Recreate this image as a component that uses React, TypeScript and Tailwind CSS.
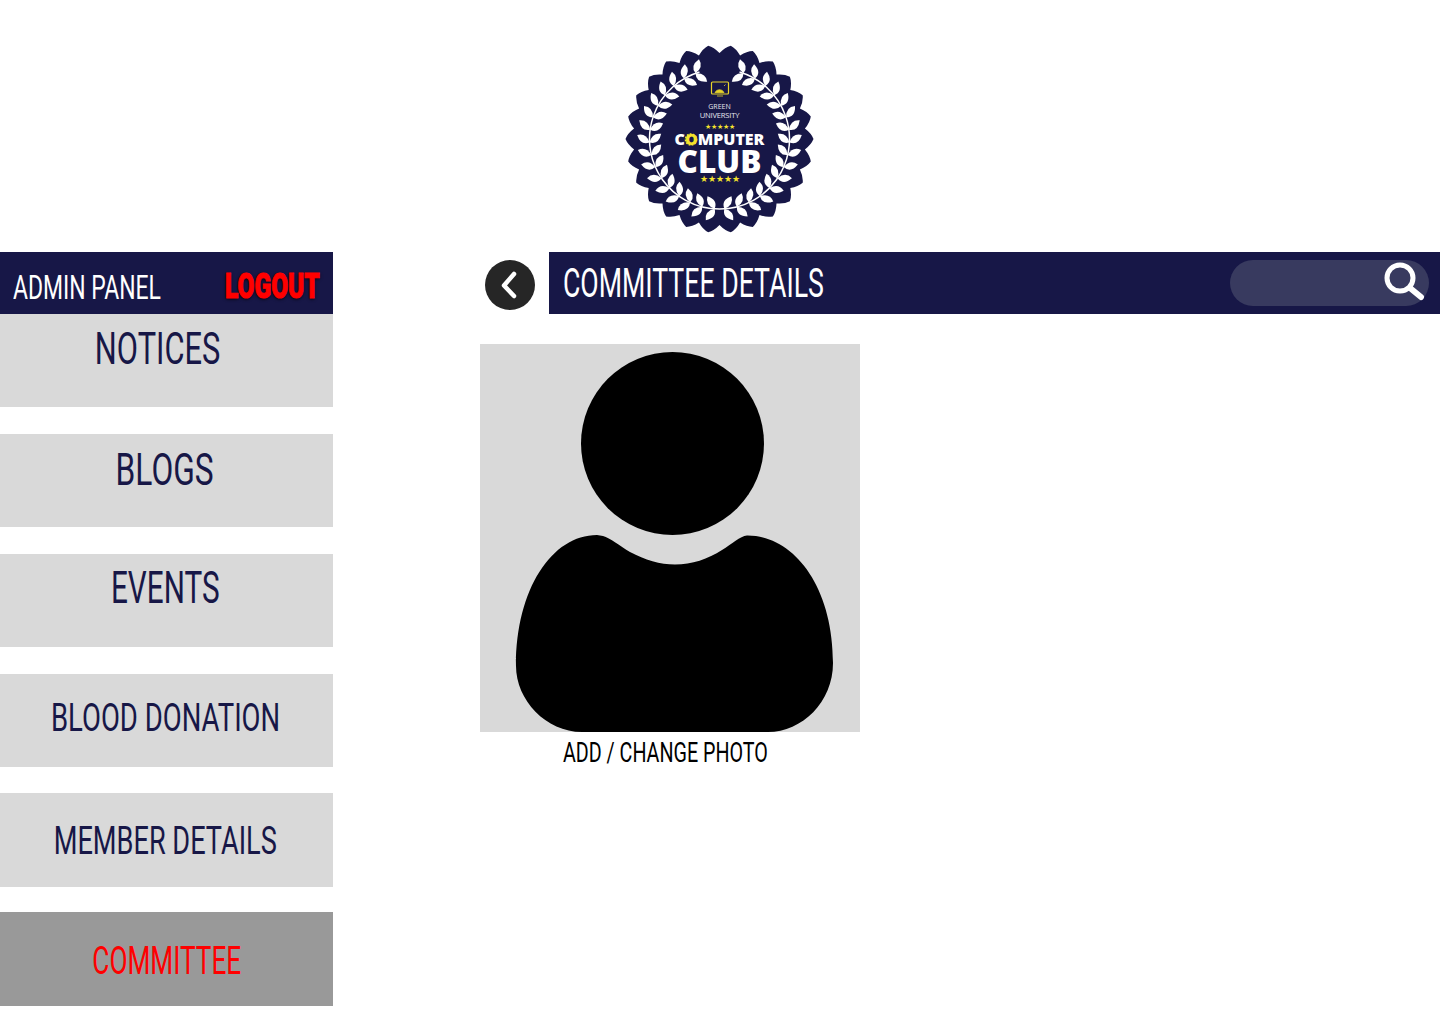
const navItems = [
  { label: "NOTICES", box: "h-[93px] pt-[8px] pr-[18px] mb-[27px] bg-[#d9d9d9] text-[#171747]", text: "text-[45px] leading-[54px] scale-x-[0.685]" },
  { label: "BLOGS", box: "h-[93px] pt-[9px] pr-[3px] mb-[27px] bg-[#d9d9d9] text-[#171747]", text: "text-[45px] leading-[54px] scale-x-[0.704]" },
  { label: "EVENTS", box: "h-[93px] pt-[7px] pr-[3px] mb-[27px] bg-[#d9d9d9] text-[#171747]", text: "text-[45px] leading-[54px] scale-x-[0.66]" },
  { label: "BLOOD DONATION", box: "h-[93px] pt-[20px] pr-[2px] mb-[26px] bg-[#d9d9d9] text-[#171747]", text: "text-[39px] leading-[48px] scale-x-[0.705]" },
  { label: "MEMBER DETAILS", box: "h-[94px] pt-[24px] pr-[2px] mb-[25px] bg-[#d9d9d9] text-[#171747]", text: "text-[39px] leading-[48px] scale-x-[0.696]" },
  { label: "COMMITTEE", box: "h-[94px] pt-[25px] bg-[#999999] text-[#ff0000]", text: "text-[39px] leading-[48px] scale-x-[0.672]" },
];

function sealPath(cx: number, cy: number) {
  const points = 26;
  let d = "";
  for (let i = 0; i < points; i++) {
    const a0 = (i / points) * Math.PI * 2;
    const a1 = ((i + 0.5) / points) * Math.PI * 2;
    const a2 = ((i + 1) / points) * Math.PI * 2;
    const px = (r: number, a: number) => (cx + r * Math.sin(a)).toFixed(1);
    const py = (r: number, a: number) => (cy - r * Math.cos(a)).toFixed(1);
    if (i === 0) d += `M${px(86, a0)} ${py(86, a0)}`;
    d += `Q${px(92, (a0 + a1) / 2)} ${py(92, (a0 + a1) / 2)} ${px(94, a1)} ${py(94, a1)}`;
    d += `Q${px(92, (a1 + a2) / 2)} ${py(92, (a1 + a2) / 2)} ${px(86, a2)} ${py(86, a2)}`;
  }
  return d + "Z";
}

function Logo() {
  const cx = 94.5;
  const cy = 94;
  const leaves = [];
  for (let i = 0; i < 16; i++) {
    const deg = 176 - i * 10.4;
    for (const s of [-1, 1]) {
      leaves.push(
        <g key={`${i}${s}`} transform={`rotate(${s * deg} ${cx} ${cy})`} fill="#fff">
          {/* outer leaf, then inner leaf, both leaning up the wreath */}
          <path d={`M${cx} ${cy - 70}Q${cx + s * 3} ${cy - 79} ${cx - s * 8} ${cy - 82}Q${cx - s * 10} ${cy - 73} ${cx} ${cy - 70}Z`} />
          <path d={`M${cx} ${cy - 70}Q${cx + s * 3} ${cy - 61} ${cx - s * 8} ${cy - 58}Q${cx - s * 10} ${cy - 67} ${cx} ${cy - 70}Z`} />
        </g>
      );
    }
  }
  return (
    <svg width="190" height="188" viewBox="0 0 190 188">
      <path d={sealPath(cx, cy)} fill="#171747" />
      <path d={`M${cx - 20} ${cy - 67}A70 70 0 1 0 ${cx + 20} ${cy - 67}`} fill="none" stroke="#fff" strokeWidth="1.5" />
      {leaves}
      <rect x="86.5" y="37" width="17" height="12" rx="1" fill="none" stroke="#e8d52a" strokeWidth="1.2" />
      <path d="M90 47.5a5 5 0 0 1 9 0zM99 41l1.5-1.5M92 51h6" fill="#e8d52a" stroke="#e8d52a" strokeWidth="0.8" />
      <g textAnchor="middle" fontFamily="'Open Sans', sans-serif">
        <text x="94.5" y="64" fontSize="7" fill="#e6e6ee">GREEN</text>
        <text x="94.5" y="73" fontSize="7.6" letterSpacing="-0.2" fill="#e6e6ee">UNIVERSITY</text>
        <text x="94.5" y="84" fontSize="6.5" fill="#f3e22c">★★★★★</text>
        <text x="94.5" y="100" fontSize="16" fontWeight="800" fill="#fff">
          C<tspan fill="#f3e22c">O</tspan>MPUTER
        </text>
        <text x="94.5" y="127.5" fontSize="31.5" fontWeight="800" fill="#fff">CLUB</text>
        <text x="94.5" y="137" fontSize="8.5" fill="#f3e22c">★★★★★</text>
      </g>
      <circle cx="66" cy="94.5" r="5.5" fill="none" stroke="#f3e22c" strokeWidth="1.6" strokeDasharray="1.8 1.2" />
    </svg>
  );
}

export default function App() {
  return (
    <div className="w-[1440px] h-[1024px] bg-white overflow-hidden font-['Roboto',sans-serif]">
      <div className="h-[252px] flex justify-center pt-[45px]">
        <Logo />
      </div>

      <div className="flex">
        {/* Sidebar */}
        <div className="w-[333px] shrink-0">
          <div className="h-[62px] bg-[#171747] flex items-center pl-[13px]">
            <div className="w-[212px] shrink-0">
              <span className="block text-white text-[33px] leading-[70px] pt-[9px] origin-left scale-x-[0.695] whitespace-nowrap">ADMIN PANEL</span>
            </div>
            <div className="w-[96px] shrink-0">
              <span className="block text-[#ff0000] font-black text-[35px] leading-[70px] pt-[8px] origin-left scale-x-[0.7] whitespace-nowrap [-webkit-text-stroke:1px_#ff0000] [text-shadow:0_1px_4px_#000]">LOGOUT</span>
            </div>
          </div>
          {navItems.map((item) => (
            <div key={item.label} className={`flex justify-center ${item.box}`}>
              <span className={`whitespace-nowrap ${item.text}`}>{item.label}</span>
            </div>
          ))}
        </div>

        {/* Main */}
        <div className="flex-1 pl-[147px]">
          <div className="flex">
            <div className="ml-[5px] mt-[8px] w-[50px] h-[50px] rounded-full bg-[#262626] flex items-center justify-center">
              <svg width="50" height="50" viewBox="0 0 50 50">
                <path d="M29 14L19 25.5L29 36" fill="none" stroke="#fff" strokeWidth="4.5" strokeLinecap="round" strokeLinejoin="round" />
              </svg>
            </div>
            <div className="ml-[14px] flex-1 h-[62px] bg-[#171747] flex items-center justify-between pl-[14px] pr-[11px]">
              <span className="text-white text-[40px] leading-[62px] pt-[1px] origin-left scale-x-[0.667] whitespace-nowrap">COMMITTEE DETAILS</span>
              <div className="w-[199px] h-[46px] rounded-full bg-[#383a5f] relative">
                <svg className="absolute right-0 top-0" width="50" height="46" viewBox="0 0 50 46">
                  <circle cx="21" cy="18" r="13" fill="none" stroke="#fff" strokeWidth="5" />
                  <path d="M31 28L42 37" stroke="#fff" strokeWidth="6" strokeLinecap="round" />
                </svg>
              </div>
            </div>
          </div>

          <div className="mt-[30px] w-[380px] h-[388px] bg-[#d9d9d9]">
            <svg width="380" height="388" viewBox="0 0 380 388">
              <circle cx="192.5" cy="99.5" r="91.5" fill="#000" />
              <path
                d="M123 192C130 194 140 202 150 208C165 216 180 220.5 195 220.5C212 220.5 228 215 242 206C252 200 260 192 267 191.5C312 191 353 240 353 319C353 358 322 388 288 388H102C66 388 36 356 36 322C36 245 72 191 117 191Z"
                fill="#000"
              />
            </svg>
          </div>
          <div className="w-[370px] h-[40px] flex justify-center">
            <span className="text-black text-[27px] leading-[40px] pt-[1px] scale-x-[0.73] whitespace-nowrap">ADD / CHANGE PHOTO</span>
          </div>
        </div>
      </div>
    </div>
  );
}
